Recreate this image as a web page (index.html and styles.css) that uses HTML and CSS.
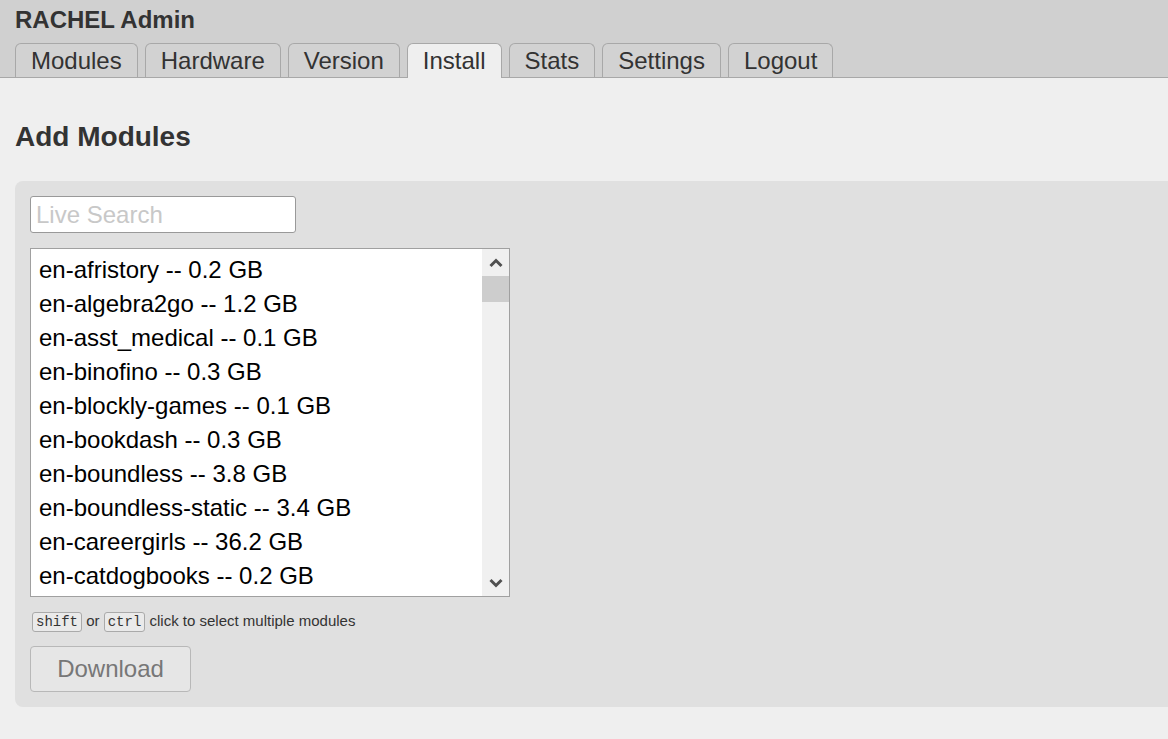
FILE: index.html
```html
<!DOCTYPE html>
<html>
<head>
<meta charset="utf-8">
<title>RACHEL Admin</title>
<link rel="stylesheet" href="styles.css">
</head>
<body>
<header class="header">
  <h1 class="title">RACHEL Admin</h1>
  <nav class="tabs">
    <a class="tab">Modules</a>
    <a class="tab">Hardware</a>
    <a class="tab">Version</a>
    <a class="tab active">Install</a>
    <a class="tab">Stats</a>
    <a class="tab">Settings</a>
    <a class="tab">Logout</a>
  </nav>
</header>
<main class="main">
  <h2 class="heading">Add Modules</h2>
  <section class="panel">
    <input class="search" type="text" placeholder="Live Search">
    <div class="listbox">
      <ul class="list">
        <li>en-afristory -- 0.2 GB</li>
        <li>en-algebra2go -- 1.2 GB</li>
        <li>en-asst_medical -- 0.1 GB</li>
        <li>en-binofino -- 0.3 GB</li>
        <li>en-blockly-games -- 0.1 GB</li>
        <li>en-bookdash -- 0.3 GB</li>
        <li>en-boundless -- 3.8 GB</li>
        <li>en-boundless-static -- 3.4 GB</li>
        <li>en-careergirls -- 36.2 GB</li>
        <li>en-catdogbooks -- 0.2 GB</li>
      </ul>
      <div class="scrollbar">
        <div class="arrow">
          <svg width="14" height="10" viewBox="0 0 14 10"><path d="M1.5 8 L7 2.5 L12.5 8" fill="none" stroke="#505050" stroke-width="3"/></svg>
        </div>
        <div class="thumb"></div>
        <div class="track"></div>
        <div class="arrow">
          <svg width="14" height="10" viewBox="0 0 14 10"><path d="M1.5 2 L7 7.5 L12.5 2" fill="none" stroke="#505050" stroke-width="3"/></svg>
        </div>
      </div>
    </div>
    <p class="hint"><kbd>shift</kbd> or <kbd>ctrl</kbd> click to select multiple modules</p>
    <button class="download">Download</button>
  </section>
</main>
</body>
</html>
```

FILE: styles.css
```css
html, body {
  margin: 0;
  padding: 0;
  overflow: hidden;
}
body {
  background: #efefef;
  font-family: "Liberation Sans", Arial, sans-serif;
  color: #333;
  width: 1168px;
  height: 739px;
}
.header {
  background: #d0d0d0;
  padding: 7px 15px 0;
  border-bottom: 1px solid #a8a8a8;
}
.title {
  margin: 0;
  font-size: 24px;
  line-height: 26px;
  font-weight: bold;
  color: #333;
}
.tabs {
  display: flex;
  gap: 7px;
  margin-top: 10px;
  height: 34px;
}
.tab {
  display: block;
  height: 34px;
  box-sizing: border-box;
  padding: 0 15px;
  border: 1px solid #a8a8a8;
  border-bottom: none;
  border-radius: 6px 6px 0 0;
  background: #d2d2d2;
  font-size: 24px;
  line-height: 34px;
  color: #333;
}
.tab.active {
  background: #efefef;
  height: 35px;
  margin-bottom: -1px;
}
.main {
  padding: 43px 0 0 15px;
}
.heading {
  margin: 0 0 28px;
  font-size: 28px;
  line-height: 32px;
  font-weight: bold;
  color: #333;
}
.panel {
  width: 1200px;
  background: #e0e0e0;
  border-radius: 8px;
  padding: 15px;
  box-sizing: border-box;
  display: flex;
  flex-direction: column;
  align-items: flex-start;
}
.search {
  width: 266px;
  height: 37px;
  box-sizing: border-box;
  border: 1px solid #999;
  border-radius: 3px;
  padding: 0 5px;
  font-family: "Liberation Sans", Arial, sans-serif;
  font-size: 24px;
  background: #fff;
  margin: 0;
}
.search::placeholder {
  color: #c8c8c8;
}
.listbox {
  margin-top: 15px;
  width: 480px;
  height: 349px;
  box-sizing: border-box;
  border: 1px solid #a0a0a0;
  background: #fff;
  display: flex;
}
.list {
  flex: 1;
  margin: 0;
  padding: 4px 0 0;
  list-style: none;
  overflow: hidden;
}
.list li {
  height: 34px;
  line-height: 34px;
  padding-left: 8px;
  font-size: 24px;
  color: #000;
  white-space: nowrap;
}
.scrollbar {
  width: 27px;
  background: #f0f0f0;
  display: flex;
  flex-direction: column;
}
.arrow {
  height: 27px;
  display: flex;
  align-items: center;
  justify-content: center;
}
.thumb {
  height: 26px;
  background: #cdcdcd;
}
.track {
  flex: 1;
}
.hint {
  margin: 14px 0 0 2px;
  font-size: 15px;
  line-height: 20px;
  color: #333;
}
kbd {
  display: inline-block;
  font-family: "Liberation Mono", "Courier New", monospace;
  font-size: 14px;
  line-height: 18px;
  padding: 0 3px;
  border: 1px solid #aaa;
  border-radius: 3px;
  background: #eaeaea;
  color: #333;
}
.download {
  margin-top: 14px;
  width: 161px;
  height: 46px;
  box-sizing: border-box;
  border: 1px solid #b8b8b8;
  border-radius: 4px;
  background: #e6e6e6;
  color: #777;
  font-family: "Liberation Sans", Arial, sans-serif;
  font-size: 24px;
  padding: 0;
}
```
